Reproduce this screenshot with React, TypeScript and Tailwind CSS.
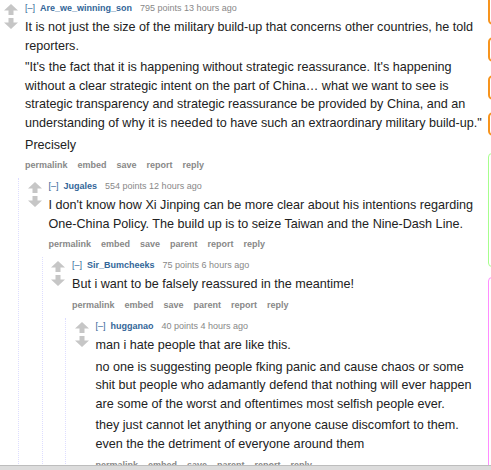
import React from "react";

type C = {
  user: string;
  points: string;
  time: string;
  paras: string[];
  links: string[];
  children?: C[];
};

const data: C = {
  user: "Are_we_winning_son",
  points: "795 points",
  time: "13 hours ago",
  paras: [
    "It is not just the size of the military build-up that concerns other countries, he told reporters.",
    "\"It's the fact that it is happening without strategic reassurance. It's happening without a clear strategic intent on the part of China… what we want to see is strategic transparency and strategic reassurance be provided by China, and an understanding of why it is needed to have such an extraordinary military build-up.\"",
    "Precisely",
  ],
  links: ["permalink", "embed", "save", "report", "reply"],
  children: [
    {
      user: "Jugales",
      points: "554 points",
      time: "12 hours ago",
      paras: [
        "I don't know how Xi Jinping can be more clear about his intentions regarding One-China Policy. The build up is to seize Taiwan and the Nine-Dash Line.",
      ],
      links: ["permalink", "embed", "save", "parent", "report", "reply"],
      children: [
        {
          user: "Sir_Bumcheeks",
          points: "75 points",
          time: "6 hours ago",
          paras: ["But i want to be falsely reassured in the meantime!"],
          links: ["permalink", "embed", "save", "parent", "report", "reply"],
          children: [
            {
              user: "hugganao",
              points: "40 points",
              time: "4 hours ago",
              paras: [
                "man i hate people that are like this.",
                "no one is suggesting people fking panic and cause chaos or some shit but people who adamantly defend that nothing will ever happen are some of the worst and oftentimes most selfish people ever.",
                "they just cannot let anything or anyone cause discomfort to them. even the the detriment of everyone around them",
              ],
              links: ["permalink", "embed", "save", "parent", "report", "reply"],
            },
          ],
        },
      ],
    },
  ],
};

function Up() {
  return (
    <svg width="14" height="11" viewBox="0 0 14 11">
      <polygon points="7,0 14,6.5 9.5,6.5 9.5,11 4.5,11 4.5,6.5 0,6.5" fill="#c6c6c6" />
    </svg>
  );
}
function Down() {
  return (
    <svg width="14" height="11" viewBox="0 0 14 11">
      <polygon points="7,11 14,4.5 9.5,4.5 9.5,0 4.5,0 4.5,4.5 0,4.5" fill="#c6c6c6" />
    </svg>
  );
}

function Comment({ c }: { c: C }) {
  return (
    <div className="pt-[2px]">
      <div className="flex">
        <div className="w-[25px] shrink-0 pl-[4px] pt-[2px] flex flex-col gap-[3px]">
          <Up />
          <Down />
        </div>
        <div className="flex-1 min-w-0">
          <div className="text-[9px] leading-[13px] whitespace-nowrap">
            <span className="text-[#369]">[–]</span>
            <span className="ml-[5px] font-bold text-[#369]">{c.user}</span>
            <span className="ml-[8px] text-[#888]">{c.points} {c.time}</span>
          </div>
          <div className="mt-[3px] flex flex-col gap-[3px] text-[12.6px] leading-[18.6px] text-[#222]">
            {c.paras.map((p, i) => (
              <p key={i}>{p}</p>
            ))}
          </div>
          <div className="mt-[5px] flex gap-[10px] text-[9px] leading-[13px] font-bold text-[#888]">
            {c.links.map((l) => (
              <span key={l}>{l}</span>
            ))}
          </div>
        </div>
      </div>
      {c.children && c.children.length > 0 && (
        <div className="mt-[6px] ml-[18px] border-l border-dotted border-[#ddf] pl-[4.5px]">
          {c.children.map((ch, i) => (
            <Comment key={i} c={ch} />
          ))}
        </div>
      )}
    </div>
  );
}

export default function App() {
  return (
    <div
      className="w-[491px] h-[470px] overflow-hidden flex flex-col bg-white"
      style={{ fontFamily: '"Liberation Sans", Arial, sans-serif' }}
    >
      <div className="flex-1 min-h-0 flex overflow-hidden">
        <div className="w-[485px] shrink-0">
          <Comment c={data} />
        </div>
        <div className="flex-1 flex flex-col pl-[3px]">
          <div className="mt-[-5px] h-[30px] w-[12px] shrink-0 rounded-[5px] border-2 border-[#f7941d]" />
          <div className="mt-[12px] h-[25px] w-[12px] shrink-0 rounded-[5px] border-2 border-[#f7941d]" />
          <div className="mt-[13px] h-[25px] w-[12px] shrink-0 rounded-[5px] border-2 border-[#f7941d]" />
          <div className="mt-[12px] h-[24px] w-[12px] shrink-0 rounded-[5px] border-2 border-[#f7941d]" />
          <div className="mt-[17px] h-[114px] w-[12px] shrink-0 rounded-[4px] border-[1.5px] border-[#a6ff8c]" />
          <div className="mt-[10px] h-[220px] w-[12px] shrink-0 rounded-[4px] border-[1.5px] border-[#ff8cff]" />
        </div>
      </div>
      <div className="h-[5px] shrink-0 bg-[#dcdcdc] border-t border-[#bdbdbd]" />
    </div>
  );
}
